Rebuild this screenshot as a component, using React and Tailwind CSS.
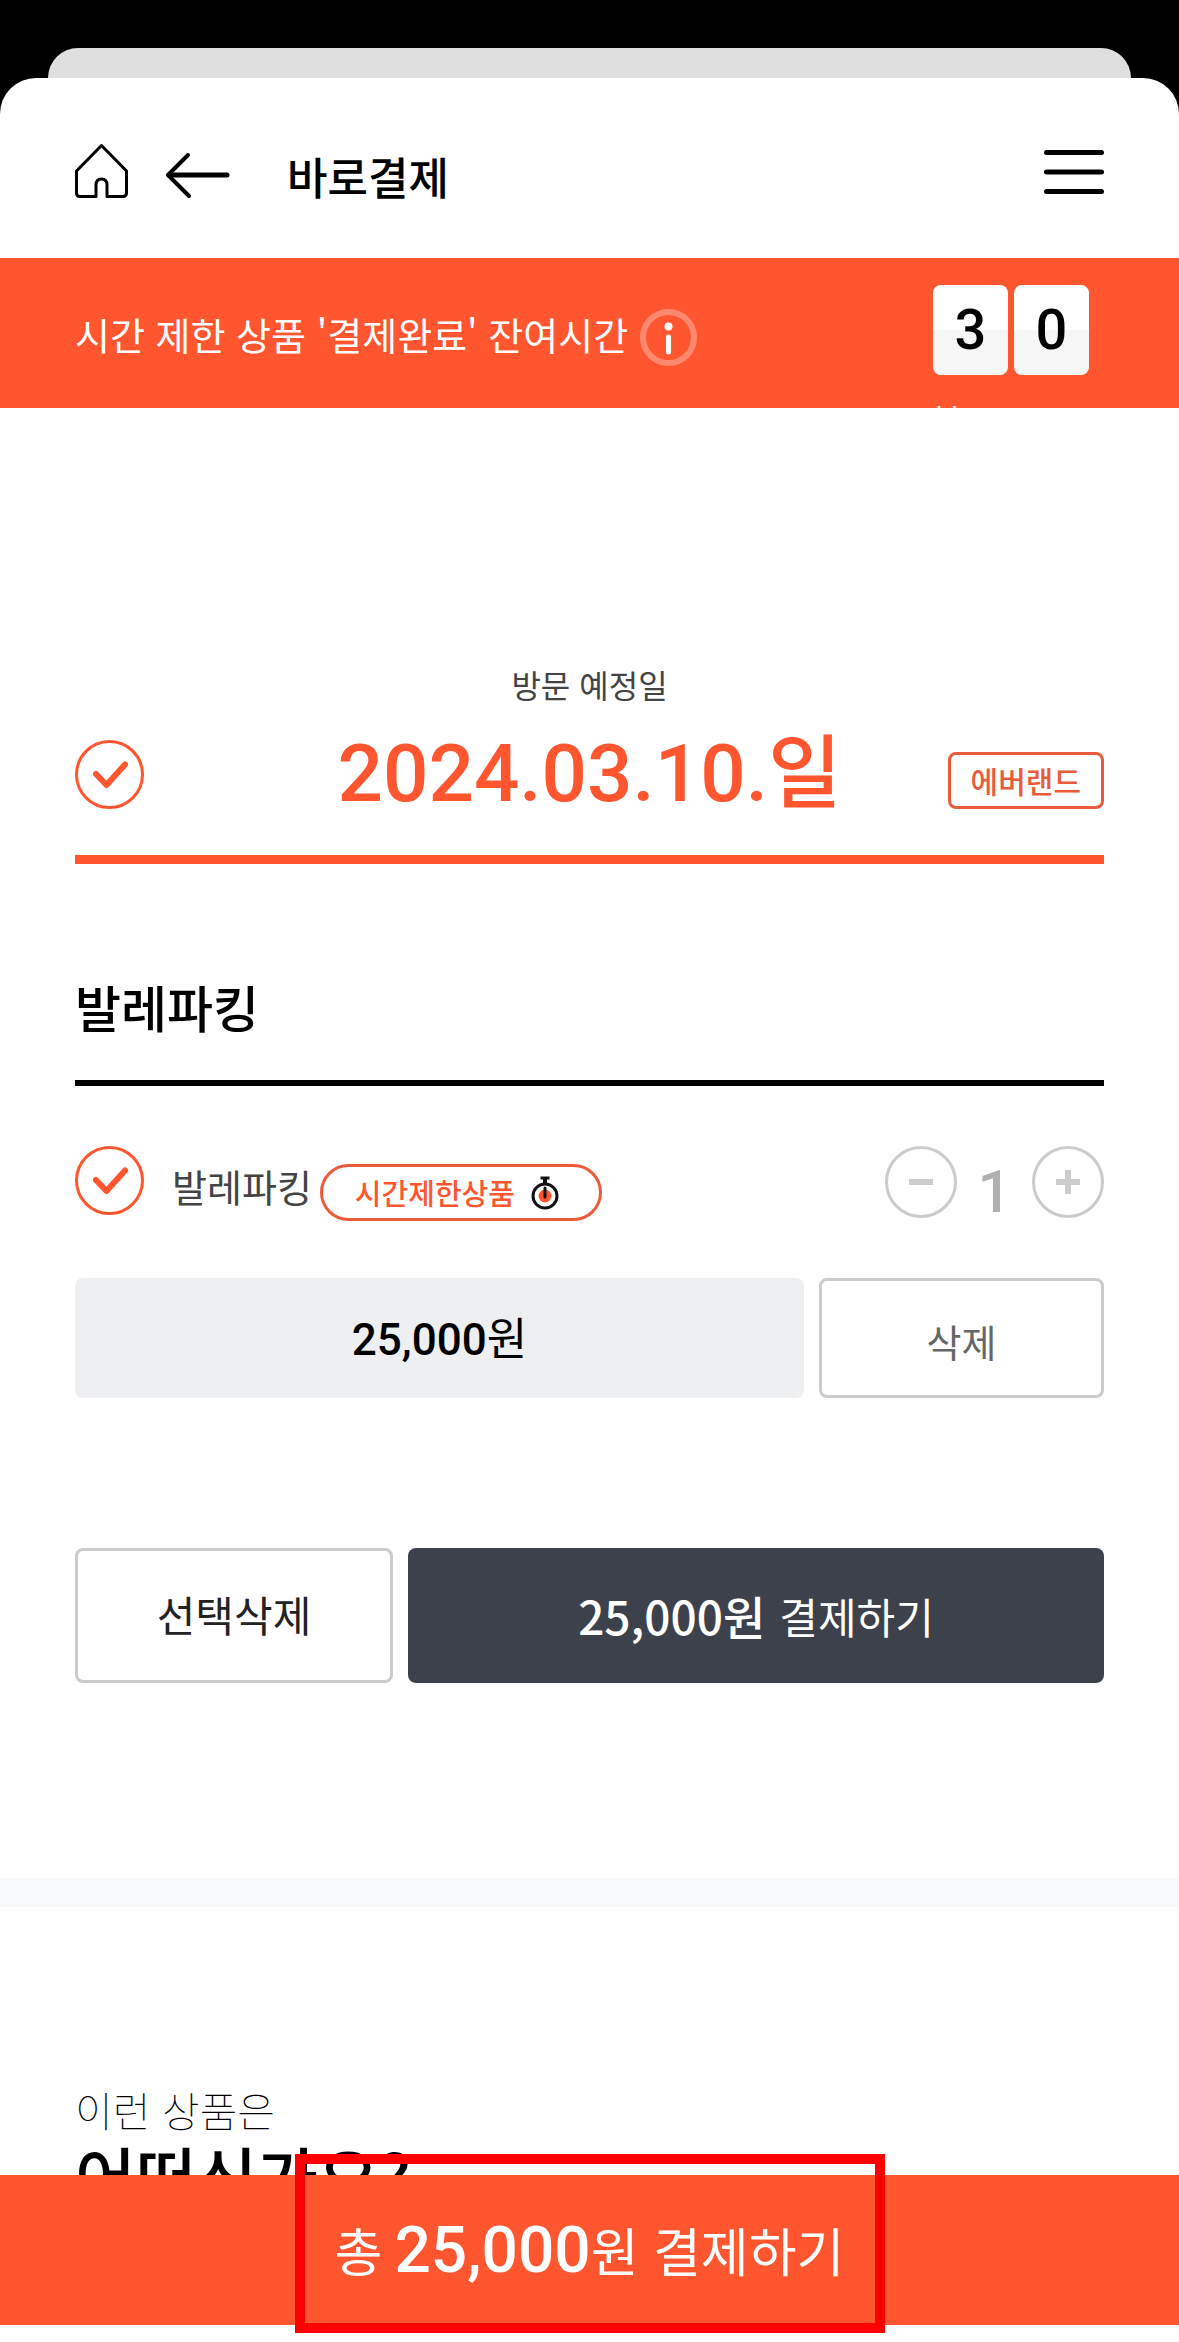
const KR = "font-['Noto_Sans_CJK_KR',sans-serif]";

function HomeIcon() {
  return (
    <svg width="54" height="56" viewBox="0 0 54 56" fill="none" stroke="#000" strokeWidth="3" strokeLinejoin="round">
      <path d="M26.5 2.5 L51.5 28 V50 Q51.5 53.5 48 53.5 H32 V42 Q32 36 26.5 36 Q21 36 21 42 V53.5 H5 Q1.5 53.5 1.5 50 V28 Z" />
    </svg>
  );
}

function BackIcon() {
  return (
    <svg width="66" height="48" viewBox="0 0 66 48" fill="none" stroke="#000" strokeLinecap="round" strokeLinejoin="round">
      <path d="M23 4 L3 24 L24 45" strokeWidth="4" />
      <path d="M4 24 H62" strokeWidth="5" />
    </svg>
  );
}

function MenuIcon() {
  return (
    <svg width="60" height="44" viewBox="0 0 60 44" fill="none" stroke="#000" strokeWidth="5" strokeLinecap="round">
      <path d="M2.5 2.5 H57.5 M2.5 22 H57.5 M2.5 41.5 H57.5" />
    </svg>
  );
}

function InfoIcon() {
  return (
    <svg width="57" height="57" viewBox="0 0 57 57">
      <circle cx="28.5" cy="28.5" r="25.5" fill="none" stroke="#fff" strokeOpacity="0.3" strokeWidth="6" />
      <circle cx="28.5" cy="17.5" r="4" fill="#fff" />
      <path d="M28.5 28 V43" stroke="#fff" strokeWidth="5" strokeLinecap="round" />
    </svg>
  );
}

function StopwatchIcon() {
  return (
    <svg width="28" height="34" viewBox="0 0 28 34">
      <path d="M9.5 2 H18.5" stroke="#111" strokeWidth="3" />
      <path d="M14 3 V8" stroke="#111" strokeWidth="4" />
      <circle cx="14" cy="20" r="12" fill="#fff" stroke="#111" strokeWidth="3" />
      <circle cx="14" cy="20" r="6.5" fill="#ff5630" />
      <path d="M14 12 V21" stroke="#111" strokeWidth="3" strokeLinecap="round" />
    </svg>
  );
}

function RoundCheck({ label }) {
  return (
    <span className="relative block size-[69px] shrink-0">
      <input
        type="checkbox"
        defaultChecked
        aria-label={label}
        className="block size-full appearance-none rounded-full border-3 border-[#ff5630] bg-white"
      />
      <svg className="pointer-events-none absolute inset-0" width="69" height="69" viewBox="0 0 69 69" fill="none" stroke="#ff5630" strokeWidth="6" strokeLinecap="round" strokeLinejoin="round">
        <path d="M21 34 L31.5 45 L50 24.5" />
      </svg>
    </span>
  );
}

function Digit({ children }) {
  return (
    <span className="flex h-[90px] w-[75px] items-center justify-center rounded-lg bg-linear-to-b from-white from-50% to-[#f6f6f6] to-50% font-[Roboto] text-[56px] leading-none font-medium text-black">
      {children}
    </span>
  );
}

function StepButton({ label, plus }) {
  return (
    <button type="button" aria-label={label} className="flex size-[72px] items-center justify-center rounded-full border-3 border-[#ccc]">
      <svg width="24" height="24" viewBox="0 0 24 24" stroke="#ccc" strokeWidth="6">
        <path d={plus ? "M0 12 H24 M12 0 V24" : "M0 12 H24"} />
      </svg>
    </button>
  );
}

export default function App() {
  return (
    <div className={`${KR} flex h-screen flex-col overflow-hidden bg-white text-black`} lang="ko">
      <div className="shrink-0 bg-black pt-12">
        <div className="mx-12 h-[30px] rounded-t-[30px] bg-[#dfdfdf]" />
        <header className="flex h-[180px] items-center rounded-t-[36px] bg-white px-[75px] pt-5">
          <a href="#home" aria-label="홈" className="pb-3.5"><HomeIcon /></a>
          <button type="button" aria-label="뒤로" className="ml-9 pb-1.5"><BackIcon /></button>
          <h1 className="ml-14 pb-1 text-[44px] leading-[60px] font-medium">바로결제</h1>
          <button type="button" aria-label="메뉴" className="ml-auto pb-3"><MenuIcon /></button>
        </header>
      </div>

      <section className="flex h-[150px] shrink-0 items-start overflow-hidden bg-[#ff5630] pr-[90px] pl-[75px] text-white">
        <p className="pt-[46px] text-[38px] leading-[60px]">시간 제한 상품 '결제완료' 잔여시간</p>
        <button type="button" aria-label="안내" className="mt-[51px] ml-3"><InfoIcon /></button>
        <div className="ml-auto pt-[27px]">
          <div className="flex gap-1.5"><Digit>3</Digit><Digit>0</Digit></div>
          <p className="pt-[22px] text-3xl leading-10">분</p>
        </div>
      </section>

      <main className="min-h-0 flex-1 overflow-hidden">
        <div className="px-[75px]">
          <section className="border-b-[9px] border-[#ff5630] pt-[252px] pb-[29px]">
            <p className="text-center text-[32px] leading-[48px] text-[#444]">방문 예정일</p>
            <div className="grid grid-cols-[1fr_auto_1fr] items-center pt-3.5">
              <RoundCheck label="2024.03.10.일 선택" />
              <h2 className="font-[Roboto,'Noto_Sans_CJK_KR',sans-serif] text-[80px] leading-[104px] font-medium text-[#ff5630]">2024.03.10.일</h2>
              <span className="mt-3 justify-self-end rounded-lg border-3 border-[#e95b3b] px-5 text-[30px] leading-[51px] font-medium text-[#e95b3b]">에버랜드</span>
            </div>
          </section>

          <h2 className="border-b-6 border-black pt-[106px] pb-[38px] text-[50px] leading-[72px] font-medium">발레파킹</h2>

          <div className="flex h-[132px] items-start pt-[60px]">
            <RoundCheck label="발레파킹 선택" />
            <p className="ml-7 pt-2.5 text-[38px] leading-[60px] text-[#444]">발레파킹</p>
            <span className="mt-[18px] ml-2 flex items-center gap-4 rounded-full border-3 border-[#e95b3b] pr-10 pl-8 text-[29px] leading-[51px] font-medium text-[#ff5630]">
              시간제한상품 <StopwatchIcon />
            </span>
            <div className="ml-auto flex items-start">
              <StepButton label="수량 감소" />
              <output className="w-[75px] pt-4 text-center font-[Roboto] text-[60px] leading-[60px] font-medium text-[#b0b0b0]">1</output>
              <StepButton label="수량 증가" plus />
            </div>
          </div>

          <div className="flex gap-[15px] pt-[60px]">
            <p className="flex h-[120px] flex-1 items-center justify-center rounded-lg bg-[#eeeff1] pt-1 font-[Roboto,'Noto_Sans_CJK_KR',sans-serif] text-[44px]">
              <span><strong className="font-medium">25,000</strong>원</span>
            </p>
            <button type="button" className="h-[120px] w-[285px] rounded-lg border-3 border-[#ccc] pt-1 text-[38px] text-[#666]">삭제</button>
          </div>

          <div className="flex gap-[15px] pt-[150px]">
            <button type="button" className="h-[135px] w-[318px] rounded-lg border-3 border-[#ccc] pb-1 text-[42px] text-[#222]">선택삭제</button>
            <button type="button" className="flex h-[135px] flex-1 items-center justify-center gap-3.5 rounded-lg bg-[#3d414b] text-[42px] text-white">
              <strong className="text-[46px] font-medium">25,000원</strong>
              <span>결제하기</span>
            </button>
          </div>
        </div>

        <section className="mt-[195px] border-t-[29px] border-[#f7f9fb] px-[75px] pt-[172px]">
          <h2>
            <span className="block text-[41px] leading-[60px] font-thin">이런 상품은</span>
            <span className="block text-[66px] leading-[70px] font-medium">어떠신가요?</span>
          </h2>
        </section>
      </main>

      <footer className="relative mb-[17px] flex h-[150px] shrink-0 justify-center bg-[#ff5630]">
        <button type="button" className="flex w-full items-baseline justify-center pt-9 text-[52px] leading-[78px] text-white">
          총<strong className="ml-3 font-[Roboto] text-[64px] font-medium">25,000</strong>원&nbsp;결제하기
        </button>
        <span className="pointer-events-none absolute -top-[21px] -bottom-2 w-[590px] border-10 border-[#ff0000]" />
      </footer>
    </div>
  );
}
